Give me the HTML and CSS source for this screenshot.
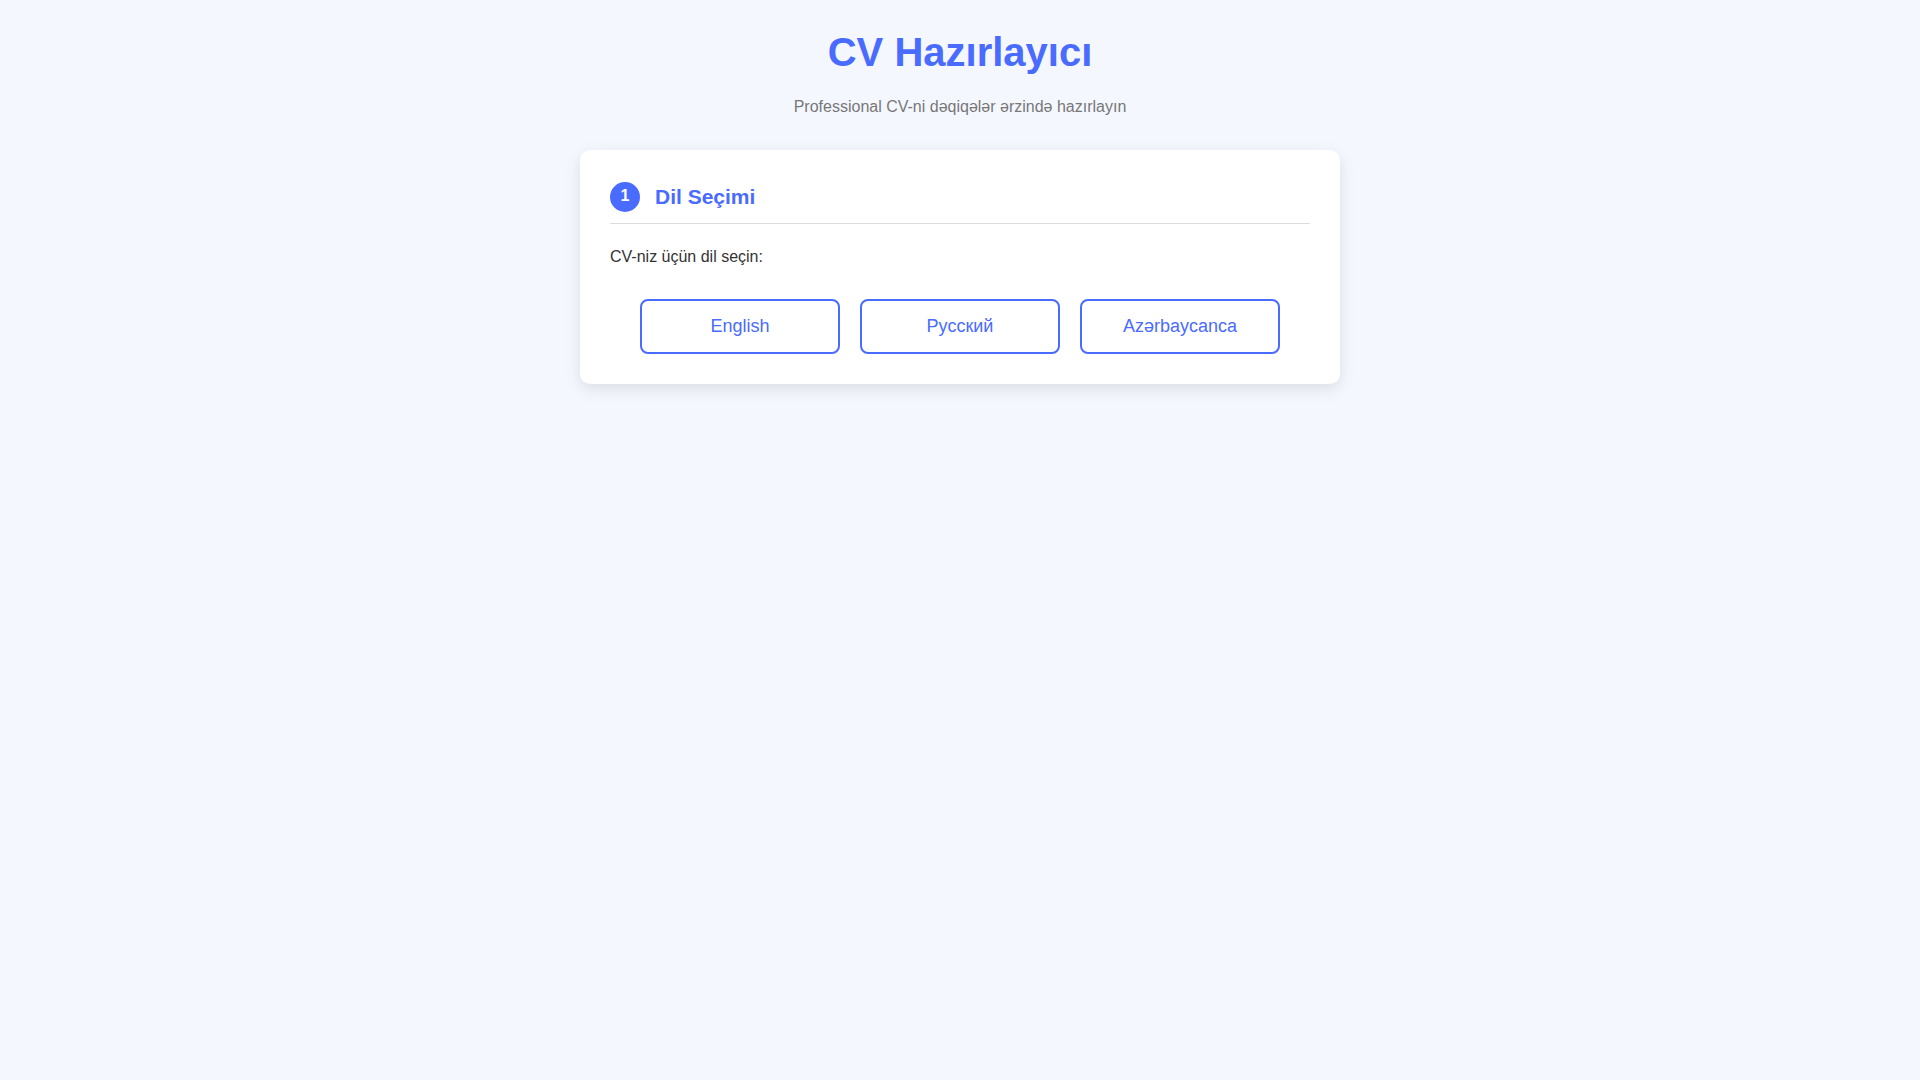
FILE: index.html
```html
<!DOCTYPE html>
<html lang="az">
<head>
<meta charset="UTF-8">
<meta name="viewport" content="width=device-width, initial-scale=1">
<title>CV Hazırlayıcı</title>
<link rel="stylesheet" href="styles.css">
</head>
<body>
<div class="container">
  <header class="header">
    <h1 class="title">CV Hazırlayıcı</h1>
    <p class="subtitle">Professional CV-ni dəqiqələr ərzində hazırlayın</p>
  </header>
  <main class="card">
    <div class="step-header">
      <span class="step-number">1</span>
      <h2 class="step-title">Dil Seçimi</h2>
    </div>
    <p class="prompt">CV-niz üçün dil seçin:</p>
    <div class="languages">
      <button type="button" class="language">English</button>
      <button type="button" class="language">Русский</button>
      <button type="button" class="language">Azərbaycanca</button>
    </div>
  </main>
</div>
</body>
</html>
```
FILE: styles.css
```css
* {
  box-sizing: border-box;
  margin: 0;
  padding: 0;
}

body {
  background: #f5f7ff;
  color: #333;
  font-family: "Liberation Sans", Arial, sans-serif;
  font-size: 16px;
  line-height: 26px;
}

.container {
  max-width: 800px;
  margin: 0 auto;
  padding: 20px;
}

.header {
  margin-bottom: 30px;
  text-align: center;
}

.title {
  margin-bottom: 10px;
  color: #4a6bff;
  font-size: 40px;
  line-height: 64px;
}

.subtitle {
  color: #777;
}

.card {
  padding: 30px;
  border-radius: 10px;
  background: #fff;
  box-shadow: 0 5px 15px rgba(0, 0, 0, 0.1);
}

.step-header {
  display: flex;
  align-items: center;
  gap: 15px;
  margin-bottom: 20px;
  padding-bottom: 10px;
  border-bottom: 1px solid #ddd;
}

.step-number {
  width: 30px;
  height: 30px;
  border-radius: 50%;
  background: #4a6bff;
  color: #fff;
  font-weight: bold;
  line-height: 28px;
  text-align: center;
}

.step-title {
  color: #4a6bff;
  font-size: 21px;
  line-height: 33px;
}

.prompt {
  margin-bottom: 30px;
  line-height: 25px;
}

.languages {
  display: flex;
  flex-wrap: wrap;
  justify-content: center;
  gap: 20px;
}

.language {
  width: 200px;
  padding: 15px 20px;
  border: 2px solid #4a6bff;
  border-radius: 8px;
  background: #fff;
  color: #4a6bff;
  font-family: inherit;
  font-size: 18px;
  line-height: 21px;
  cursor: pointer;
}
```
